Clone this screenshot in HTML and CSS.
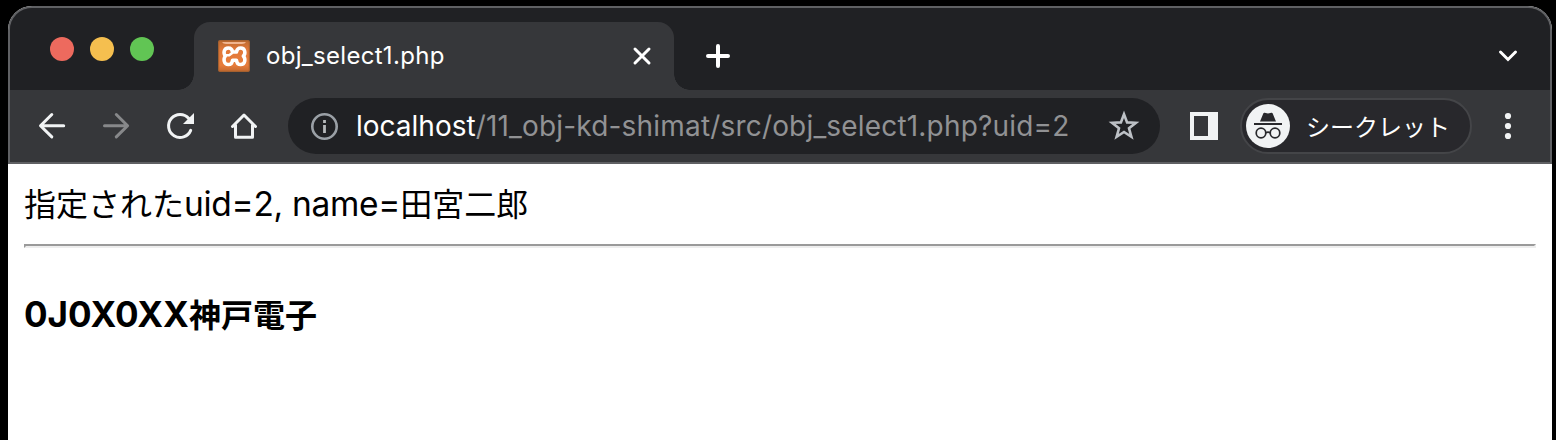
FILE: index.html
```html
<!DOCTYPE html>
<html lang="ja">
<head>
<meta charset="utf-8">
<title>obj_select1.php</title>
<link rel="stylesheet" href="styles.css">
</head>
<body>
<div class="window">
  <div class="chrome">
    <div class="tabstrip">
      <div class="lights"><i class="light red"></i><i class="light yellow"></i><i class="light green"></i></div>
      <div class="tab">
        <svg class="favicon" viewBox="0 0 32 32">
          <defs><linearGradient id="fg" x1="0" y1="0" x2="0" y2="1"><stop offset="0" stop-color="#bd6a30"/><stop offset=".3" stop-color="#e2793a"/><stop offset=".8" stop-color="#e87d3c"/><stop offset="1" stop-color="#c56a30"/></linearGradient></defs>
          <rect x=".6" y=".6" width="30.8" height="30.8" rx="1.5" fill="url(#fg)" stroke="#a5602f" stroke-width="1.2"/>
          <path d="M4 2h24q-1 2-4 2H8q-3 0-4-2z" fill="#f0b48e"/>
          <path d="M7.400 16C5 13.500 5.800 8 10.300 8c2.700 0 3.900 1.600 4.200 4h4c.3-2.400 1.500-4 4.200-4 4.500 0 5.300 5.500 2.600 8 2.700 3 1.900 8.600-2.600 8.600-2.700 0-3.900-1.600-4.200-4.400h-4c-.3 2.800-1.500 4.400-4.200 4.400C5.800 24.600 5 19 7.400 16z" fill="none" stroke="#fff" stroke-width="3.500" stroke-linejoin="round"/>
          <path d="M7.500 15.300h3.700l3.300-2.500" fill="none" stroke="#fff" stroke-width="2.600"/>
        </svg>
        <span class="tab-title">obj_select1.php</span>
        <svg class="close" viewBox="0 0 20 20"><path d="M3 3l14 14M17 3L3 17" stroke="#fff" stroke-width="3" stroke-linecap="round"/></svg>
      </div>
      <svg class="plus" viewBox="0 0 24 24"><path d="M12 2v20M2 12h20" stroke="#fff" stroke-width="4" stroke-linecap="round"/></svg>
      <svg class="chevron" viewBox="0 0 20 14"><path d="M2.500 3l7.500 7.500L17.500 3" fill="none" stroke="#fff" stroke-width="3" stroke-linecap="round"/></svg>
    </div>
    <div class="toolbar">
      <svg class="nav" viewBox="0 0 32 32"><path d="M15.800 4.500L4.500 15.700l11.300 11.200M5 15.700h22.700" fill="none" stroke="#f1f3f4" stroke-width="3" stroke-linecap="round" stroke-linejoin="round"/></svg>
      <svg class="nav" viewBox="0 0 32 32"><path d="M16.300 4.500l11.300 11.200-11.300 11.200M27 15.700H4.500" fill="none" stroke="#87888a" stroke-width="3" stroke-linecap="round" stroke-linejoin="round"/></svg>
      <svg class="nav" viewBox="0 0 32 32"><path d="M24.800 8.500A11.500 11.500 0 1 0 26.700 20.400" fill="none" stroke="#f1f3f4" stroke-width="3" stroke-linecap="round"/><path d="M30 3v11H19z" fill="#f1f3f4"/></svg>
      <svg class="nav" viewBox="0 0 32 32"><path d="M4.500 16.500L16 5l11.500 11.500M7.500 15v12.300h17V15" fill="none" stroke="#f1f3f4" stroke-width="3" stroke-linecap="round" stroke-linejoin="round"/></svg>
      <div class="omnibox">
        <svg class="info" viewBox="0 0 28 28"><circle cx="14.500" cy="14.500" r="12.200" fill="none" stroke="#9aa0a6" stroke-width="2.600"/><path d="M14.500 8v3M14.500 13v8" stroke="#b6b9bb" stroke-width="2.800"/></svg>
        <span class="url"><span class="host">localhost</span><span class="path">/11_obj-kd-shimat/src/obj_select1.php?uid=2</span></span>
        <svg class="star" viewBox="0 0 32 32"><path d="M16 4.200l3.100 8.200 8.800.4-6.900 5.500 2.400 8.500L16 22l-7.400 4.800 2.400-8.500-6.900-5.500 8.800-.4z" fill="none" stroke="#bdc1c6" stroke-width="2.600"/></svg>
      </div>
      <svg class="panel" viewBox="0 0 28 28"><path d="M0 0h28v28H0zM4 4v20h14V4z" fill="#f1f3f4" fill-rule="evenodd"/></svg>
      <div class="incognito">
        <svg class="avatar" viewBox="0 0 44 44">
          <circle cx="22" cy="22" r="22" fill="#f1f3f4"/>
          <path d="M14 17.500l3.400-8.200q.3-.8 1.200-.6l3.400.8 3.400-.8q.9-.2 1.200.6L30 17.500z" fill="#28282c"/>
          <path d="M8 20h28" stroke="#28282c" stroke-width="2"/>
          <g fill="none" stroke="#28282c" stroke-width="1.700"><circle cx="15" cy="29" r="4.800"/><circle cx="29" cy="29" r="4.800"/><path d="M19.800 28.700q2.200-1.200 4.400 0"/></g>
        </svg>
        <span class="incognito-label">シークレット</span>
      </div>
      <svg class="menu" viewBox="0 0 8 28"><g fill="#f1f3f4"><circle cx="4" cy="4" r="3.100"/><circle cx="4" cy="14" r="3.100"/><circle cx="4" cy="24" r="3.100"/></g></svg>
    </div>
  </div>
  <main class="page">
    <p class="lead">指定された<span class="latin">uid=2, name=</span>田宮二郎</p>
    <hr class="rule">
    <h4 class="name"><span class="latin-bold">0J0X0XX</span>神戸電子</h4>
  </main>
</div>
</body>
</html>
```
FILE: styles.css
```css
* { box-sizing: border-box; }
body {
  margin: 0;
  background: #000;
  font-family: Inter, "Noto Sans CJK JP", sans-serif;
  overflow: hidden;
}
svg { display: block; flex: none; }
.window { margin: 6px 4px 0 8px; height: 434px; background: #fff; border-radius: 24px 24px 0 0; }
.chrome {
  height: 158px;
  background: #36373a;
  border: 2px solid #5f6063;
  border-radius: 24px 24px 0 0;
  overflow: hidden;
}
.tabstrip { display: flex; height: 82px; padding-top: 14px; background: #202124; }
.lights { display: flex; gap: 16px; width: 184px; padding: 15px 0 0 40px; }
.light { width: 24px; height: 24px; border-radius: 50%; }
.red { background: #ed6a5e; }
.yellow { background: #f5bf4f; }
.green { background: #61c554; }
.tab {
  position: relative;
  display: flex;
  align-items: center;
  width: 480px;
  height: 68px;
  padding: 0 22px 0 24px;
  background: #36373a;
  border-radius: 16px 16px 0 0;
}
.tab::before, .tab::after {
  content: "";
  position: absolute;
  bottom: 0;
  width: 16px;
  height: 16px;
}
.tab::before { left: -16px; background: radial-gradient(circle at 0 0, transparent 15.5px, #36373a 16px); }
.tab::after { right: -16px; background: radial-gradient(circle at 100% 0, transparent 15.5px, #36373a 16px); }
.favicon { width: 32px; height: 32px; }
.tab-title { margin-left: 16px; color: #fff; font-size: 24px; line-height: 32px; letter-spacing: .3px; white-space: nowrap; }
.close { width: 20px; height: 20px; margin-left: auto; }
.plus { width: 24px; height: 24px; margin: 22px 0 0 32px; }
.chevron { width: 20px; height: 14px; margin: 27px 32px 0 auto; }
.toolbar { display: flex; align-items: center; height: 72px; padding-left: 26px; }
.nav { width: 32px; height: 32px; margin-right: 32px; }
.omnibox {
  display: flex;
  align-items: center;
  width: 872px;
  height: 56px;
  margin-left: -4px;
  padding: 0 20px 0 22px;
  background: #202124;
  border-radius: 28px;
}
.info { width: 28px; height: 28px; }
.url { margin-left: 18px; font-size: 28px; line-height: 40px; white-space: nowrap; }
.host { color: #fff; }
.path { color: #919294; letter-spacing: .18px; }
.star { width: 32px; height: 32px; margin-left: auto; }
.panel { width: 28px; height: 28px; margin-left: 30px; }
.incognito {
  display: flex;
  align-items: center;
  width: 232px;
  height: 56px;
  margin-left: 22px;
  padding-left: 4px;
  background: #28282c;
  border: 2px solid #444548;
  border-radius: 28px;
}
.avatar { width: 44px; height: 44px; }
.incognito-label { margin-left: 16px; color: #fff; font: 400 24px/36px "Noto Sans CJK JP", sans-serif; white-space: nowrap; }
.menu { width: 8px; height: 28px; margin-left: 32px; }
.page { padding: 14px 16px 0; color: #000; }
.lead { margin: 0; height: 48px; font: 32px/48px "Noto Sans CJK JP", sans-serif; white-space: nowrap; }
.latin { font-family: Inter, sans-serif; font-size: 33.5px; line-height: 1; letter-spacing: -.3px; }
.rule { height: 4px; margin: 18px 0 0; border: 2px solid; border-color: #9a9a9a #eee #eee #9a9a9a; }
.name { margin: 41px 0 0; font: 700 32px/48px "Noto Sans CJK JP", sans-serif; white-space: nowrap; }
.latin-bold { font-family: Inter, sans-serif; font-size: 35px; line-height: 1; }
```
